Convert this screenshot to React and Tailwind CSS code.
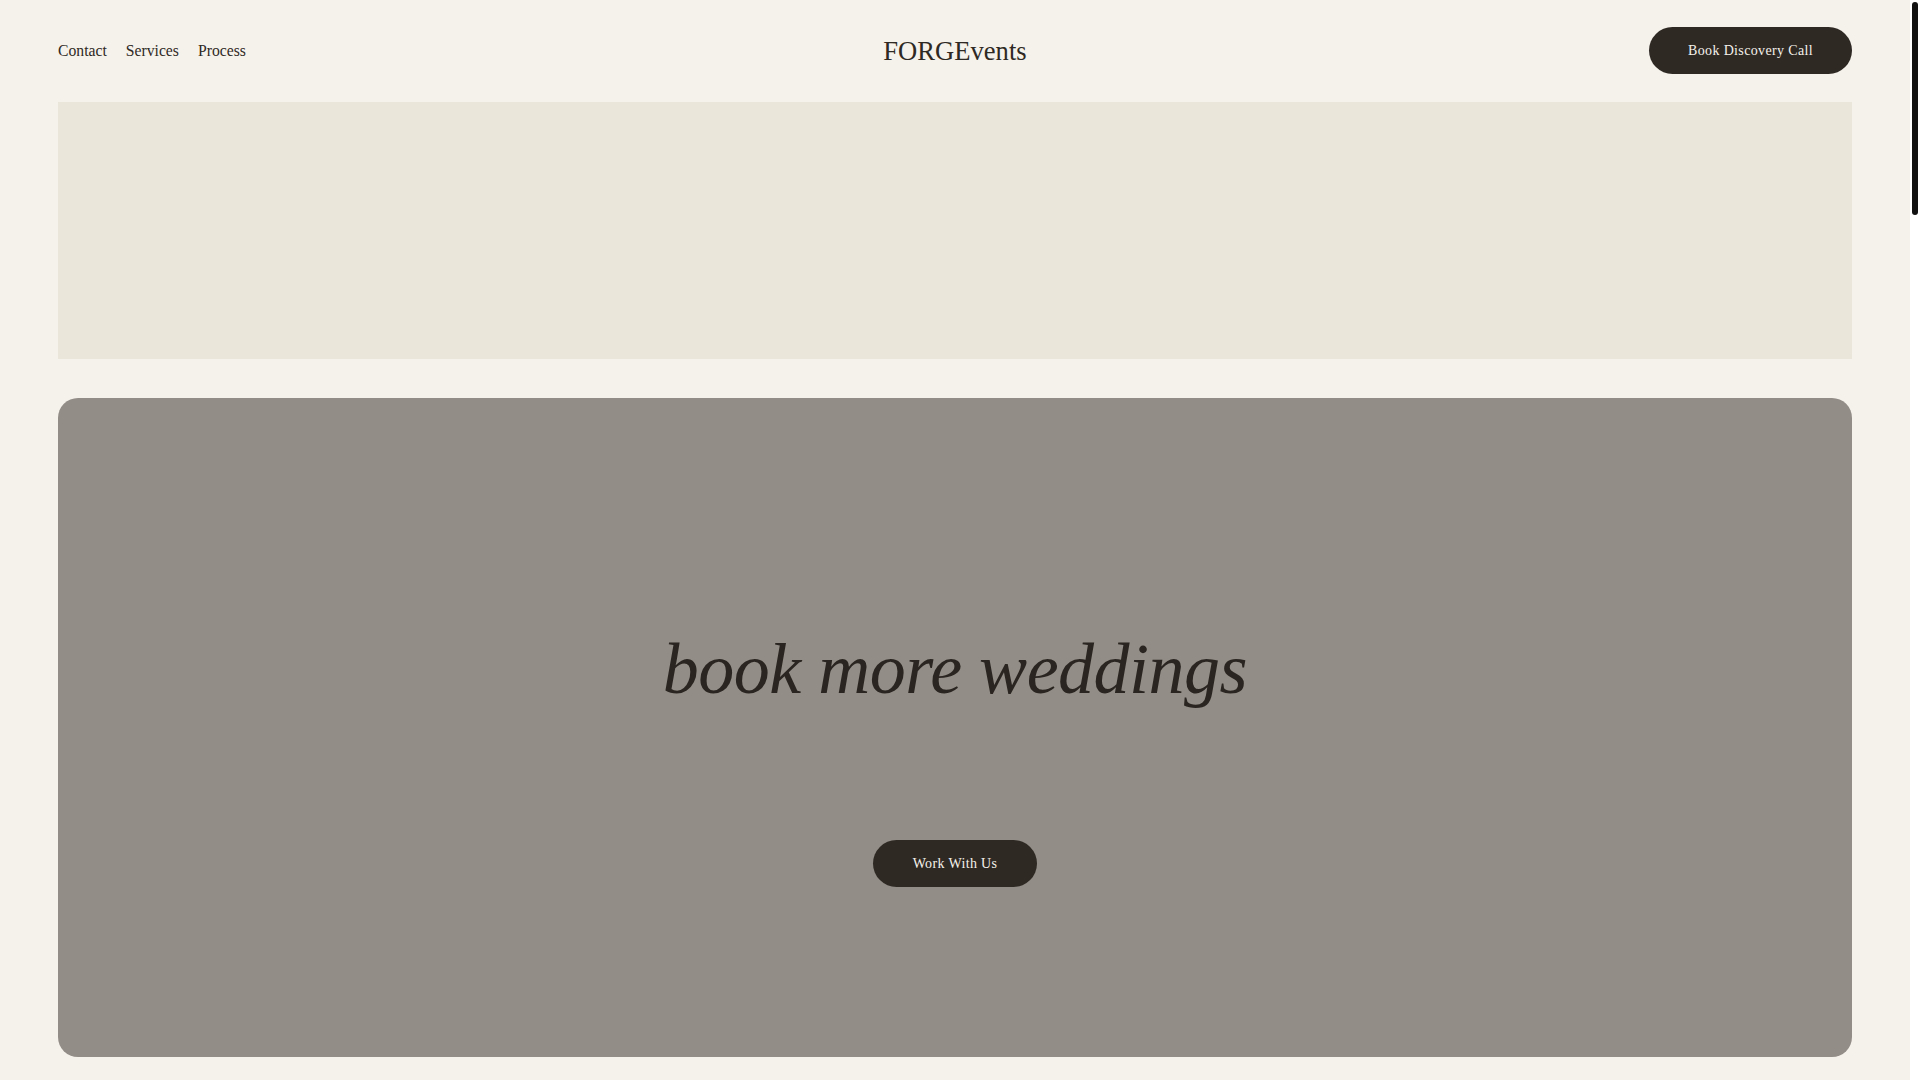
import React from "react";

const serif = { fontFamily: '"Liberation Serif", "Times New Roman", serif' };

function Header() {
  return (
    <header className="grid grid-cols-3 items-center px-[58px] pt-[27px] pb-[28px]">
      <nav className="flex items-center gap-[19px] text-[15.7px] text-[#2f2924]">
        <a href="#contact">Contact</a>
        <a href="#services">Services</a>
        <a href="#process">Process</a>
      </nav>
      <div className="flex justify-center pt-[1px]">
        <a href="#" className="text-[26.6px] leading-none text-[#2f2924]">FORGEvents</a>
      </div>
      <div className="flex justify-end">
        <button className="h-[47px] w-[203px] rounded-full bg-[#2f2924] text-[14px] tracking-wide text-[#f5f2eb]">
          Book Discovery Call
        </button>
      </div>
    </header>
  );
}

function Hero() {
  return (
    <section className="px-[58px]">
      <div className="h-[257px] bg-[#ebe6da]" />
      <div className="mt-[39px] flex h-[659px] flex-col items-center rounded-[20px] bg-[#928d86] pt-[235px]">
        <h1 className="text-[72px] italic leading-none tracking-[-0.5px] text-[#2b2521]">book more weddings</h1>
        <button className="mt-[135px] h-[47px] w-[164px] rounded-full bg-[#2f2924] text-[14px] tracking-wide text-[#f5f2eb]">
          Work With Us
        </button>
      </div>
    </section>
  );
}

function Services() {
  const items = [
    ["Lead Generation", "Targeted campaigns that bring qualified couples straight to your inbox."],
    ["Brand Strategy", "Positioning that sets your venue or studio apart in a crowded market."],
    ["Sales Systems", "Follow-up flows that turn enquiries into booked consultations."],
  ];
  return (
    <section id="services" className="px-[58px] pt-[160px]">
      <h2 className="text-[48px] italic text-[#2b2521]">Services</h2>
      <div className="mt-[60px] grid grid-cols-3 gap-[40px]">
        {items.map(([t, d]) => (
          <div key={t} className="flex h-[700px] flex-col justify-end rounded-[20px] bg-[#ebe6da] p-[40px]">
            <h3 className="text-[28px] text-[#2b2521]">{t}</h3>
            <p className="mt-3 text-[16px] text-[#5a534c]">{d}</p>
          </div>
        ))}
      </div>
    </section>
  );
}

function Process() {
  const steps = ["Discovery Call", "Strategy", "Launch", "Growth"];
  return (
    <section id="process" className="px-[58px] pt-[160px]">
      <h2 className="text-[48px] italic text-[#2b2521]">Process</h2>
      <div className="mt-[60px] flex flex-col">
        {steps.map((s, i) => (
          <div key={s} className="flex h-[300px] items-center gap-[60px] border-t border-[#d9d3c6]">
            <span className="text-[20px] text-[#928d86]">0{i + 1}</span>
            <span className="text-[40px] text-[#2b2521]">{s}</span>
          </div>
        ))}
      </div>
    </section>
  );
}

function Testimonials() {
  return (
    <section className="px-[58px] pt-[160px]">
      <div className="flex h-[400px] flex-col items-center justify-center rounded-[20px] bg-[#ebe6da] px-[120px] text-center">
        <p className="text-[36px] italic text-[#2b2521]">
          “Our calendar was full for the season within three months of working with FORGEvents.”
        </p>
        <span className="mt-6 text-[16px] text-[#5a534c]">Venue Owner</span>
      </div>
    </section>
  );
}

function Contact() {
  return (
    <section id="contact" className="px-[58px] pb-[58px] pt-[160px]">
      <div className="flex h-[1000px] flex-col items-center justify-center rounded-[20px] bg-[#2f2924]">
        <h2 className="text-[64px] italic text-[#f5f2eb]">let's talk</h2>
        <button className="mt-[60px] h-[47px] w-[203px] rounded-full bg-[#f5f2eb] text-[14px] tracking-wide text-[#2f2924]">
          Book Discovery Call
        </button>
      </div>
      <footer className="flex items-center justify-between pt-[58px] text-[14px] text-[#5a534c]">
        <span>FORGEvents</span>
        <span>© 2024 FORGEvents. All rights reserved.</span>
      </footer>
    </section>
  );
}

function ScrollIndicator() {
  return (
    <div className="fixed right-0 top-0 h-screen w-[10px] bg-white">
      <div className="mx-[2px] mt-[2px] h-[213px] rounded-full bg-[#111111]" />
    </div>
  );
}

export default function App() {
  return (
    <div style={serif} className="min-h-screen bg-[#f5f2eb]">
      <main className="mr-[10px]">
        <Header />
        <Hero />
        <Services />
        <Process />
        <Testimonials />
        <Contact />
      </main>
      <ScrollIndicator />
    </div>
  );
}
